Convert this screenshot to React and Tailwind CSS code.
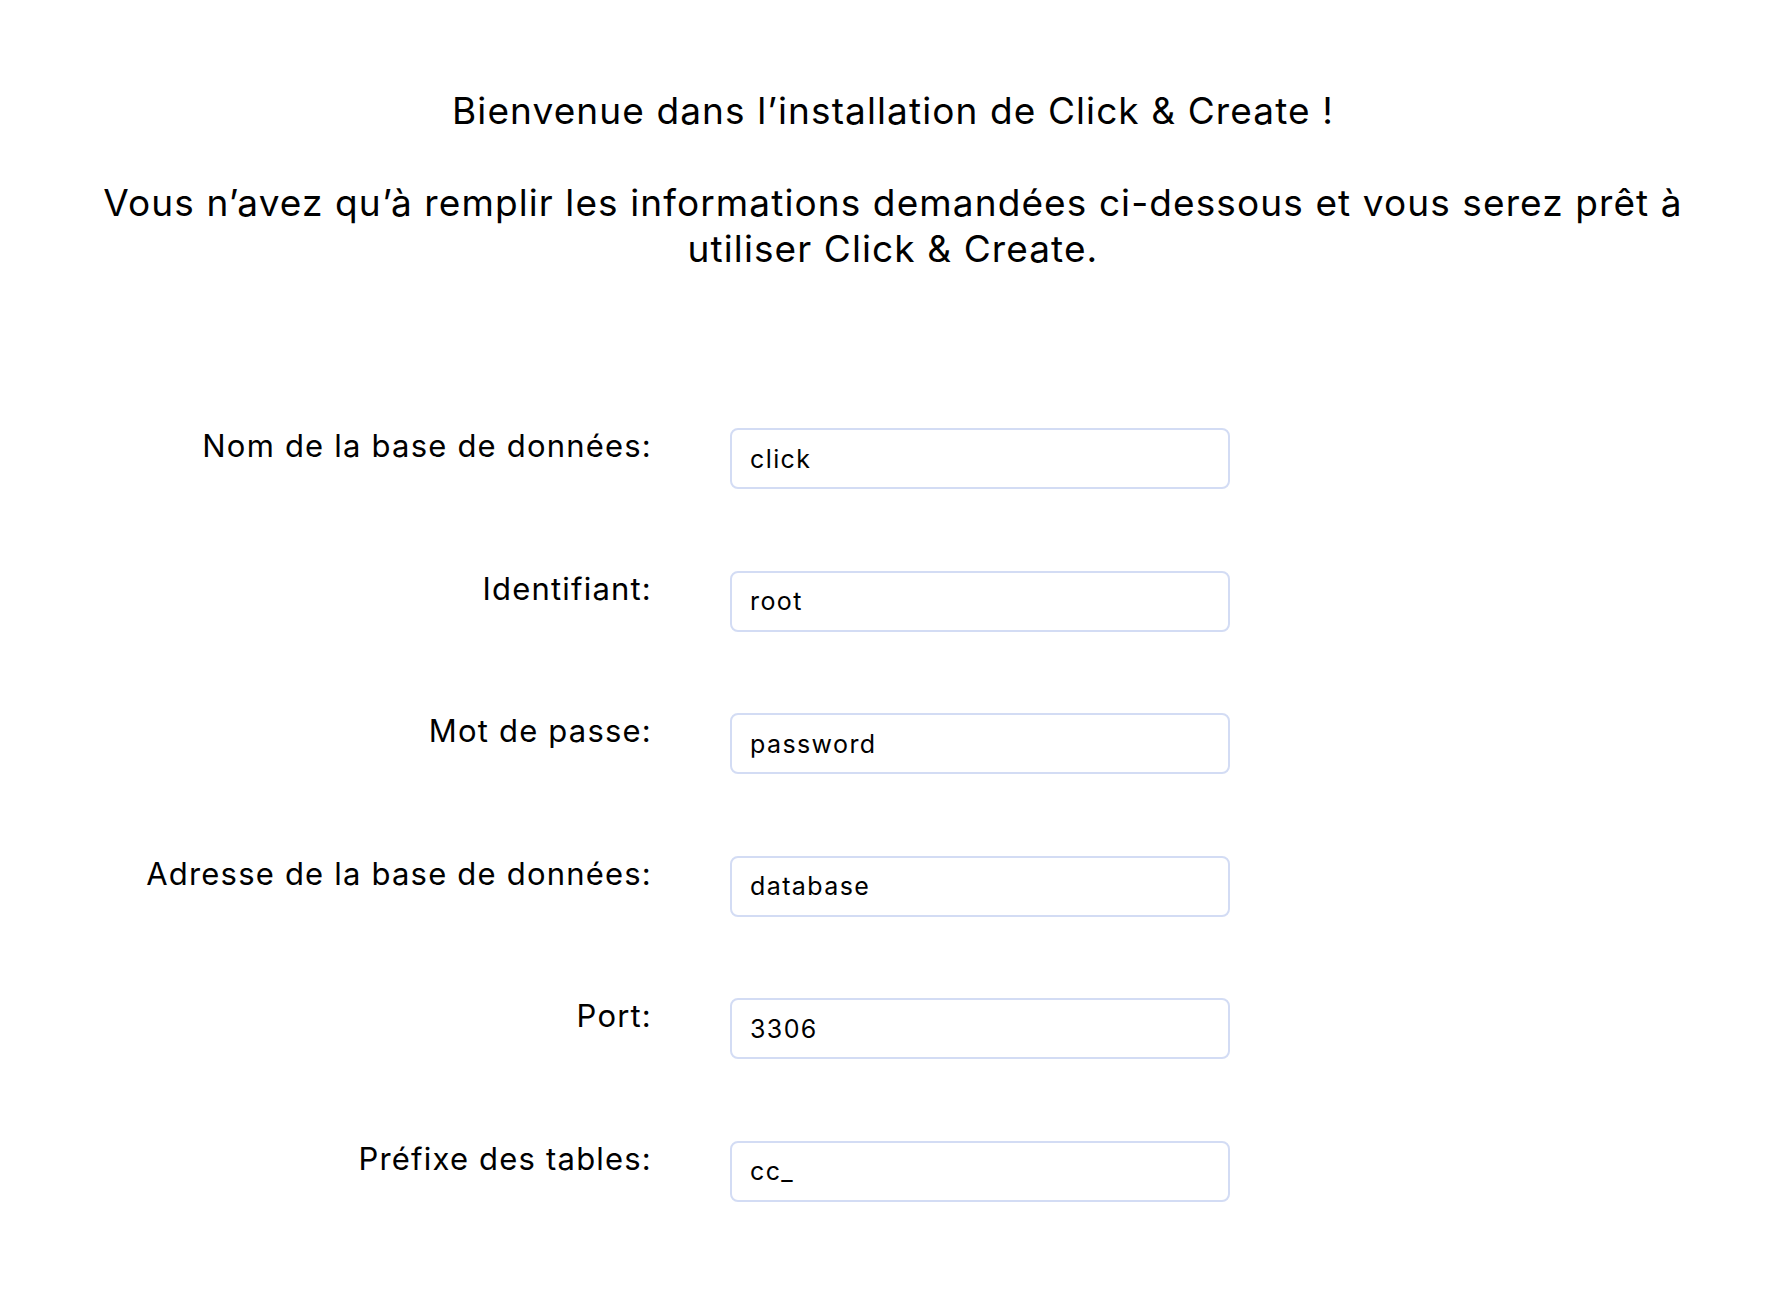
const fields = [
  { label: 'Nom de la base de données:', value: 'click' },
  { label: 'Identifiant:', value: 'root' },
  { label: 'Mot de passe:', value: 'password' },
  { label: 'Adresse de la base de données:', value: 'database' },
  { label: 'Port:', value: '3306' },
  { label: 'Préfixe des tables:', value: 'cc_' },
];

export default function App() {
  return (
    <div className="min-h-screen bg-white text-black font-['Inter',sans-serif]">
      {/* Intro */}
      <div className="pt-[88px] px-10 text-center text-[37px] leading-[46px] tracking-[1.1px]">
        <p>
          Bienvenue dans l’installation de Click &amp; Create !
          <br />
          <br />
          Vous n’avez qu’à remplir les informations demandées ci-dessous et vous serez prêt à
          <br />
          utiliser Click &amp; Create.
        </p>
      </div>

      {/* Form */}
      <form className="mt-[156px] flex flex-col gap-[81.5px]">
        {fields.map((f) => (
          <div key={f.label} className="flex items-start">
            <label className="w-[652px] text-right text-[31px] leading-[36px] tracking-[1.2px]">
              {f.label}
            </label>
            <input
              type="text"
              defaultValue={f.value}
              className="ml-[78px] w-[500px] h-[61px] pl-[18px] pr-4 border-2 border-[#d3dcf4] rounded-lg text-[25px] tracking-[1.4px] text-black outline-none"
            />
          </div>
        ))}
      </form>
    </div>
  );
}
